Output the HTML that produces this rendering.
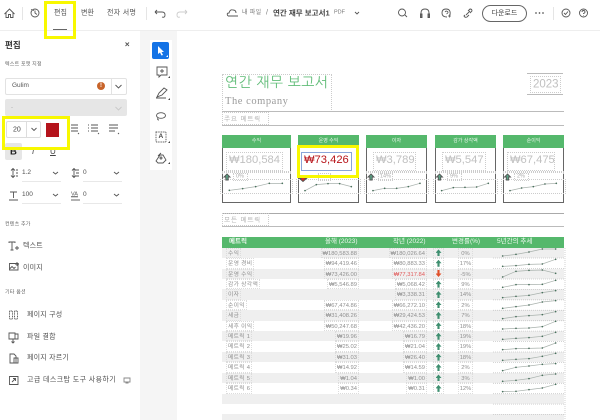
<!DOCTYPE html>
<html lang="ko"><head><meta charset="utf-8"><style>
html,body{margin:0;padding:0;width:600px;height:420px;overflow:hidden;background:#fff}
body{position:relative;font-family:"Liberation Sans","Noto Sans CJK KR",sans-serif;color:#505050;filter:blur(.3px)}
.a{position:absolute;white-space:nowrap}
.t{position:absolute;white-space:nowrap;line-height:1;transform:translateY(-50%)}
svg.i{position:absolute;fill:none;stroke:#555;stroke-width:.9;overflow:visible}
.ln{position:absolute;background:#bbb;height:1px}
.dot{position:absolute;border:1px dotted #ccc;box-sizing:border-box}
.card{position:absolute;top:135px;height:68px;border:1px solid #666;border-top:0;box-sizing:border-box}
.card b{position:absolute;left:-1px;right:-1px;top:0;height:13px;background:#55b86c;color:#e8f5ea;font:400 5px/13px "Liberation Sans","Noto Sans CJK KR",sans-serif;text-align:center}
.val{position:absolute;font-size:11.2px;color:#c0c0c0;line-height:1}
.row{position:relative;height:10.43px;font-size:5.8px;line-height:10.43px;color:#8f8f8f}
.row:nth-child(odd){background:#efefef}
.row span{position:absolute;top:0;height:10.43px;line-height:13.500px;white-space:nowrap;box-sizing:border-box;outline:1px dotted #dcdcdc;outline-offset:-1px;padding:0 2px}
.m{left:4px;letter-spacing:.3px}.c{right:205px}.p{right:137px}.u{left:211px;width:11px;color:#3f8f70}.g{left:236px;width:15px;text-align:center;padding:0!important}
.u::after{content:"";position:absolute;left:2.500px;top:1.700px;width:6px;height:7px;background:currentColor;clip-path:polygon(50% 0,100% 50%,68% 50%,68% 100%,32% 100%,32% 50%,0 50%)}
.u.d{color:#e0502a}.u.d::after{transform:scaleY(-1)}
</style></head><body>

<div class="a" style="left:0;top:30px;width:600px;height:1px;background:#eee"></div>
<div class="a" style="left:140px;top:31px;width:37px;height:389px;background:#f5f5f5"></div>
<div class="a" style="left:150px;top:40px;width:22px;height:130px;background:#fff"></div>
<div class="a" style="left:152px;top:42px;width:17px;height:17px;background:#1473e6;border-radius:2px"></div>

<!-- top bar -->
<svg class="i" style="left:0;top:0" width="200" height="30"><path d="M4.500 14 9.500 9 14.500 14M6 12.500V17.500H8.500V14.500H10.500V17.500H13V12.500"/><circle cx="35" cy="13" r="4"/><path d="M35 10.500 35 13 37 14.500M31 9.500 34 10.500"/><path d="M155 12H162Q165 12 165 15T162 17M155 12 157 10M155 12 157 14"/><path d="M187 12H180Q177 12 177 15T180 17M187 12 185 10M187 12 185 14" stroke="#ccc"/></svg>
<div class="a" style="left:22px;top:7px;width:1px;height:13px;background:#e5e5e5"></div>
<div class="t" style="left:54px;top:13px;font-size:7px">편집</div>
<div class="a" style="left:53px;top:29px;width:14px;height:1px;background:#666"></div>
<div class="t" style="left:81px;top:13px;font-size:7px">변환</div>
<div class="t" style="left:107px;top:13px;font-size:7px;letter-spacing:.3px">전자 서명</div>
<div class="a" style="left:146px;top:7px;width:1px;height:13px;background:#e5e5e5"></div>

<svg class="i" style="left:0;top:0" width="600" height="30"><path d="M228 16H238M228 16Q226 13 229 13Q230 9 233 10Q236 10 236 13"/><path d="M355 12 357 14 359 12"/></svg>
<div class="t" style="left:242px;top:13px;font-size:6px;color:#777;letter-spacing:.3px">내 파일</div>
<div class="t" style="left:266px;top:13px;font-size:7px;color:#777">/</div>
<div class="t" style="left:273px;top:13px;font-size:7.500px;font-weight:700;color:#444">연간 재무 보고서1</div>
<div class="t" style="left:334px;top:13px;font-size:5.500px;color:#777">PDF</div>

<svg class="i" style="left:0;top:0" width="600" height="30"><circle cx="402" cy="12.500" r="3.500"/><path d="M405 15 407 17"/><path d="M421 18V13Q421 9 425 9T429 13V18M420.500 14H422V17.500H420.500ZM428 14H429.500V17.500H428Z"/><path d="M450 15Q451 9 446 9Q442 9 442 13Q442 17 447 17"/><path d="M445 12Q446 10.500 447.500 11.500T446.500 14M448 16H451M449.500 14.500V17.500" stroke-width=".8"/><path d="M465 15 464 16Q465 18 467 17L469 15M468 11 470 9Q472 9 472 11L470 13M466 15 470 11"/><circle cx="566" cy="13" r="4"/><path d="M564 13 565.500 14.500 568 11.500"/><circle cx="583.500" cy="13" r="4"/><path d="M582 12Q582 10.500 583.500 10.500T585 12Q585 13 583.500 13.500V14M583.500 15V15.500"/><circle cx="536" cy="13" r=".4"/><circle cx="539.500" cy="13" r=".4"/><circle cx="543" cy="13" r=".4"/></svg>
<div class="a" style="left:482px;top:5px;width:45px;height:17px;box-sizing:border-box;border:1px solid #666;border-radius:9px;font-size:7px;line-height:15px;text-align:center;color:#444">다운로드</div>
<div class="a" style="left:553px;top:7px;width:1px;height:13px;background:#e5e5e5"></div>

<!-- left panel -->
<div class="t" style="left:5px;top:45px;font-size:8.500px;font-weight:700;color:#333">편집</div>
<svg class="i" style="left:0;top:0" width="140" height="60"><path d="M125.500 42.500 129 46M129 42.500 125.500 46"/></svg>
<div class="t" style="left:5px;top:65px;font-size:5px;color:#666;letter-spacing:.2px">텍스트 포맷 지정</div>
<div class="a" style="left:5px;top:78px;width:122px;height:17px;box-sizing:border-box;border:1px solid #e2e2e2;border-radius:2px"></div>
<div class="a" style="left:111px;top:78px;width:1px;height:17px;background:#e2e2e2"></div>
<div class="t" style="left:12px;top:86px;font-size:6.500px;color:#555">Gulim</div>
<div class="a" style="left:97px;top:82px;width:8px;height:8px;border-radius:50%;background:#c8642a;color:#fff;font-size:6px;line-height:8px;text-align:center;font-weight:700">!</div>
<svg class="i" style="left:0;top:0" width="140" height="120"><path d="M115.500 85 118.500 88 121.500 85"/></svg>
<div class="a" style="left:5px;top:99px;width:122px;height:17px;background:#e6e6e6;border-radius:2px"></div>
<svg class="i" style="left:0;top:0" width="140" height="120"><path d="M115.500 107 118.500 110 121.500 107" stroke="#c8c8c8"/></svg>
<div class="t" style="left:11px;top:108px;font-size:6px;color:#aaa">-</div>

<div class="a" style="left:6px;top:121px;width:35px;height:17px;box-sizing:border-box;border:1px solid #ddd;border-radius:2px"></div>
<div class="a" style="left:26px;top:121px;width:1px;height:17px;background:#ddd"></div>
<div class="t" style="left:13px;top:130px;font-size:7px;color:#444">20</div>
<svg class="i" style="left:0;top:0" width="140" height="170"><path d="M31.500 128 34 130.500 36.500 128"/><path d="M71 125H78M71 128H78M71 131H78M91 125H98M91 128H98M91 131H98M109 125H118M109 128H118M109 131H115"/><path d="M88 125H89M88 128H89M88 131H89"/><path d="M78 134 79 133M98 134 99 133M118 134 119 133"/></svg>
<div class="a" style="left:46px;top:123px;width:13px;height:14px;background:#b5141c"></div>

<div class="a" style="left:5px;top:143px;width:17px;height:17px;background:#e6e6e6;border-radius:2px"></div>
<div class="t" style="left:10px;top:152px;font-size:9.500px;font-weight:700;color:#222">B</div>
<div class="t" style="left:32px;top:152px;font-size:8px;font-style:italic;color:#444">I</div>
<div class="t" style="left:50px;top:152px;font-size:8px;text-decoration:underline;color:#444">U</div>

<svg class="i" style="left:0;top:0" width="140" height="210" stroke-width=".8"><path d="M13 169V177M11 170.500 13 168.500 15 170.500M11 175.500 13 177.500 15 175.500M16 170H18M16 173H18M16 176H18"/><path d="M74 169V177M72 170.500 74 168.500 76 170.500M72 175.500 74 177.500 76 175.500M76 170H79M76 173H79M76 176H79"/><path d="M10 192H17M13.500 192V198M9 200H18"/><path d="M71 200H80"/><path d="M53 172 55.500 174 58 172M114 172 116.500 174 119 172M53 194 55.500 196 58 194M114 194 116.500 196 119 194"/></svg>
<div class="t" style="left:22px;top:173px;font-size:6.500px">1.2</div>
<div class="t" style="left:83px;top:173px;font-size:6.500px">0</div>
<div class="t" style="left:22px;top:195px;font-size:6.500px">100</div>
<div class="t" style="left:71px;top:195px;font-size:5.500px;text-decoration:underline;color:#555">VA</div>
<div class="t" style="left:83px;top:195px;font-size:6.500px">0</div>
<div class="ln" style="left:22px;top:181px;width:39px;background:#e8e8e8"></div>
<div class="ln" style="left:83px;top:181px;width:39px;background:#e8e8e8"></div>
<div class="ln" style="left:22px;top:203px;width:39px;background:#e8e8e8"></div>
<div class="ln" style="left:83px;top:203px;width:39px;background:#e8e8e8"></div>

<div class="t" style="left:5px;top:225px;font-size:5px;color:#666;letter-spacing:.2px">컨텐츠 추가</div>
<svg class="i" style="left:0;top:0" width="140" height="400" stroke-width=".8"><path d="M9 243V242H15V243M12 242V250M10.500 250H13.500M15 248H19M17 246V250"/><path d="M9.500 263.500H18V270H9.500ZM9.500 269 12 266.500 14 268.500 15.500 267M17 262V266M15 264H19"/>
<path d="M9.500 311H12.500V319H9.500ZM14.500 311H17.500V319H14.500Z" stroke-dasharray="1 .6"/>
<path d="M9 333H15V339H9ZM15 334H18V339H15M13 339V343M11.500 341.500 13 343 14.500 341.500"/>
<path d="M10 354H14L16 356V363H10ZM14 358H18V363H14Z"/>
<path d="M9.500 376.500H18V384.500H9.500ZM12 382 15.500 378.500M13 378.500H15.500V381"/>
<path d="M124 378H130V382H124ZM125.500 383H128.500" stroke="#888"/></svg>
<div class="t" style="left:23px;top:246px;font-size:7px;letter-spacing:.2px">텍스트</div>
<div class="t" style="left:23px;top:268px;font-size:7px;letter-spacing:.2px">이미지</div>
<div class="t" style="left:5px;top:293px;font-size:5px;color:#666;letter-spacing:.2px">기타 옵션</div>
<div class="t" style="left:27px;top:315px;font-size:7px;letter-spacing:.2px">페이지 구성</div>
<div class="t" style="left:27px;top:337px;font-size:7px;letter-spacing:.2px">파일 결합</div>
<div class="t" style="left:27px;top:358px;font-size:7px;letter-spacing:.2px">페이지 자르기</div>
<div class="t" style="left:27px;top:380px;font-size:7px;letter-spacing:.4px">고급 데스크탑 도구 사용하기</div>

<!-- tool rail -->
<svg class="i" style="left:0;top:0" width="177" height="175" stroke-width=".9"><path d="M158 46V54L160 52.500 161.500 55.500 163 55 161.500 52H164Z" fill="#fff" stroke="none"/><path d="M166 57 168 57 168 55Z" fill="#fff" stroke="none"/>
<path d="M157 67H167V75H161L159 77V75H157ZM162 69V73M160 71H164"/><path d="M168 78 170 78 170 76Z" fill="#444" stroke="none"/>
<path d="M157 97 159 93 164 88 167 90 162 95ZM156 98H166"/><path d="M168 100 170 100 170 98Z" fill="#444" stroke="none"/>
<ellipse cx="161" cy="115.500" rx="4.500" ry="2.800"/><path d="M158 118Q157 120 159 120"/>
<path d="M156 132H166V142H156Z" stroke-dasharray="1 .7"/><path d="M168 143 170 143 170 141Z" fill="#444" stroke="none"/>
<path d="M156 161 160 155 163 155 166 160 163 163H158ZM158 156 161 153"/><circle cx="161" cy="158" r="1"/><path d="M168 164 170 164 170 162Z" fill="#444" stroke="none"/></svg>
<div class="t" style="left:158.500px;top:137px;font-size:6.500px;font-weight:700;color:#444">A</div>

<!-- document head -->
<div class="dot" style="left:222px;top:74px;width:110px;height:38px"></div>
<div class="t" style="left:225px;top:83px;font:14px/1 NanumGothic,'Noto Sans CJK KR',sans-serif;color:#62bd79;letter-spacing:.37px">연간 재무 보고서</div>
<div class="t" style="left:225px;top:102px;font:10.500px/1 'Liberation Serif',serif;color:#9a9a9a;letter-spacing:.55px">The company</div>
<div class="ln" style="left:527px;top:73px;width:36px"></div>
<div class="ln" style="left:527px;top:94px;width:36px"></div>
<div class="dot" style="left:530px;top:76px;width:31px;height:17px"></div>
<div class="t" style="left:533px;top:85px;font-size:11.500px;color:#c0c0c0">2023</div>
<div class="ln" style="left:222px;top:111px;width:342px"></div>
<div class="ln" style="left:222px;top:125px;width:342px"></div>
<div class="dot" style="left:222px;top:112px;width:47px;height:13px"></div>
<div class="t" style="left:224px;top:118.500px;font:6.500px/1 NanumGothic,'Noto Sans CJK KR',sans-serif;color:#a8a8a8;letter-spacing:.8px">주요 메트릭</div>

<!-- cards -->
<div class="card" style="left:222px;width:69px"><b>수익</b></div>
<div class="card" style="left:298px;width:61px"><b>운영 수익</b></div>
<div class="card" style="left:366px;width:61px"><b>이자</b></div>
<div class="card" style="left:435px;width:61px"><b>감가 상각액</b></div>
<div class="card" style="left:503px;width:61px"><b>순이익</b></div>

<div class="dot" style="left:226px;top:152px;width:57px;height:19px"></div>
<div class="dot" style="left:373px;top:152px;width:43px;height:19px"></div>
<div class="dot" style="left:442px;top:152px;width:44px;height:19px"></div>
<div class="dot" style="left:507px;top:152px;width:48px;height:19px"></div>
<div class="val" style="left:229px;top:155px">₩180,584</div>
<div class="val" style="left:376px;top:155px">₩3,789</div>
<div class="val" style="left:445px;top:155px">₩5,547</div>
<div class="val" style="left:510px;top:155px">₩67,475</div>

<div class="dot" style="left:222px;top:171px;width:69px;height:1px"></div>
<div class="dot" style="left:366px;top:171px;width:61px;height:1px"></div>
<div class="dot" style="left:435px;top:171px;width:61px;height:1px"></div>
<div class="dot" style="left:503px;top:171px;width:61px;height:1px"></div>

<div class="dot" style="left:220px;top:179px;width:73px;height:15px"></div>
<div class="dot" style="left:296px;top:179px;width:65px;height:15px"></div>
<div class="dot" style="left:364px;top:179px;width:65px;height:15px"></div>
<div class="dot" style="left:433px;top:179px;width:65px;height:15px"></div>
<div class="dot" style="left:501px;top:179px;width:65px;height:15px"></div>

<div class="dot" style="left:233px;top:173px;width:15px;height:8px"></div>
<div class="t" style="left:236px;top:177px;font-size:5.500px;color:#aaa">0%</div>
<div class="dot" style="left:318px;top:173px;width:13px;height:8px"></div>
<div class="dot" style="left:378px;top:173px;width:15px;height:8px"></div>
<div class="t" style="left:380px;top:177px;font-size:5.500px;color:#aaa">14%</div>
<div class="dot" style="left:447px;top:173px;width:15px;height:8px"></div>
<div class="t" style="left:450px;top:177px;font-size:5.500px;color:#aaa">9%</div>
<div class="dot" style="left:514px;top:173px;width:15px;height:8px"></div>
<div class="t" style="left:517px;top:177px;font-size:5.500px;color:#aaa">2%</div>

<svg class="i" style="left:0;top:0" width="600" height="240" stroke="none"><defs><marker id="k" markerUnits="userSpaceOnUse" markerWidth="8" markerHeight="8" refX="4" refY="4"><circle cx="4" cy="4" r="2" fill="#2f7d55"/></marker></defs>
<g fill="#5aa385"><path d="M227 174 230 177H228.200V180H225.800V177H224Z"/><path d="M371 174 374 177H372.200V180H369.800V177H368Z"/><path d="M439.500 174 442.500 177H440.700V180H438.300V177H436.500Z"/><path d="M507.500 174 510.500 177H508.700V180H506.300V177H504.500Z"/></g>
<path d="M301 177H305V178.500H306.500L303 181.500 299.500 178.500H301Z" fill="#d0342a"/>
<g transform="translate(210,125) scale(.3333)" fill="none" stroke="#a9b2ad" stroke-width="2.200" marker-start="url(#k)" marker-mid="url(#k)" marker-end="url(#k)"><polyline points="58,196 98,191 137,185 178,175 217,175"/><polyline points="285,197 319,179 354,176 389,176 424,185"/><polyline points="489,197 524,190 560,190 595,185 630,175"/><polyline points="695,197 730,188 765,187 800,186 835,175"/><polyline points="900,197 935,189 970,185 1005,177 1039,175"/></g></svg>

<!-- section 2 -->
<div class="ln" style="left:222px;top:213px;width:342px;background:#aaa"></div>
<div class="ln" style="left:222px;top:226px;width:342px"></div>
<div class="dot" style="left:222px;top:213px;width:47px;height:13px"></div>
<div class="t" style="left:224px;top:219.500px;font:6.500px/1 NanumGothic,'Noto Sans CJK KR',sans-serif;color:#a8a8a8;letter-spacing:.8px">모든 메트릭</div>

<!-- table -->
<div class="a" style="left:222px;top:237px;width:342px;height:10.700px;background:#55b86c;color:#eef8f0;font-size:6.500px;line-height:10.700px">
<div class="a" style="left:7px;font-weight:700">메트릭</div><div class="a" style="left:103px">올해 (2023)</div><div class="a" style="left:171px">작년 (2022)</div><div class="a" style="left:230px">변경률(%)</div><div class="a" style="left:275px">5년간의 추세</div></div>
<div class="a" style="left:222px;top:247.700px;width:342px;white-space:normal">
<div class="row"><span class="m">수익</span><span class="c">₩180,583.88</span><span class="p">₩180,026.64</span><span class="u"></span><span class="g">0%</span></div>
<div class="row"><span class="m">운영 경비</span><span class="c">₩94,419.46</span><span class="p">₩80,883.33</span><span class="u"></span><span class="g">17%</span></div>
<div class="row"><span class="m">운영 수익</span><span class="c">₩73,426.00</span><span class="p" style="color:#e05a5a">₩77,317.84</span><span class="u d"></span><span class="g">-5%</span></div>
<div class="row"><span class="m">감가 상각액</span><span class="c">₩5,546.89</span><span class="p">₩5,068.42</span><span class="u"></span><span class="g">9%</span></div>
<div class="row"><span class="m">이자</span><span class="p">₩3,338.31</span><span class="u"></span><span class="g">14%</span></div>
<div class="row"><span class="m">순이익</span><span class="c">₩67,474.86</span><span class="p">₩66,272.10</span><span class="u"></span><span class="g">2%</span></div>
<div class="row"><span class="m">세금</span><span class="c">₩31,408.26</span><span class="p">₩29,424.53</span><span class="u"></span><span class="g">7%</span></div>
<div class="row"><span class="m">세후 이익</span><span class="c">₩50,247.68</span><span class="p">₩42,436.20</span><span class="u"></span><span class="g">18%</span></div>
<div class="row"><span class="m">메트릭 1</span><span class="c">₩19.96</span><span class="p">₩16.79</span><span class="u"></span><span class="g">19%</span></div>
<div class="row"><span class="m">메트릭 2</span><span class="c">₩25.02</span><span class="p">₩21.04</span><span class="u"></span><span class="g">19%</span></div>
<div class="row"><span class="m">메트릭 3</span><span class="c">₩31.03</span><span class="p">₩26.40</span><span class="u"></span><span class="g">18%</span></div>
<div class="row"><span class="m">메트릭 4</span><span class="c">₩14.92</span><span class="p">₩14.59</span><span class="u"></span><span class="g">2%</span></div>
<div class="row"><span class="m">메트릭 5</span><span class="c">₩1.04</span><span class="p">₩1.00</span><span class="u"></span><span class="g">3%</span></div>
<div class="row"><span class="m">메트릭 6</span><span class="c">₩0.34</span><span class="p">₩0.31</span><span class="u"></span><span class="g">12%</span></div>
<div class="row"></div><div class="row"></div><div class="row"></div>
</div>
<svg class="i" style="left:0;top:0" width="600" height="420" stroke="none"><path fill="none" stroke="#c8c8c8" stroke-width=".8" stroke-dasharray="1 1" d="M493 258H565M493 268.500H565M493 279H565M493 289.400H565M493 299.800H565M493 310.300H565M493 320.700H565M493 331.100H565M493 341.500H565M493 352H565M493 362.400H565M493 372.800H565M493 383.300H565M493 393.700H565M493 404.100H565M493 414.500H565M565 248V420"/>
<g transform="translate(390,230) scale(.3333)" fill="none" stroke="#a9b2ad" stroke-width="2.200" marker-start="url(#k)" marker-mid="url(#k)" marker-end="url(#k)">
<polyline points="338,78 378,73 417,66 457,57 497,57"/><polyline points="338,109 378,107 417,103 457,102 497,88"/><polyline points="338,141 378,124 417,121 457,120 497,130"/><polyline points="338,172 378,164 417,164 457,163 497,151"/><polyline points="338,203 378,199 417,196 457,188 497,182"/><polyline points="338,235 378,230 417,225 457,216 497,212"/><polyline points="338,266 378,260 417,257 457,254 497,245"/><polyline points="338,297 378,295 417,294 457,290 497,274"/><polyline points="338,328 378,325 417,323 457,319 497,307"/><polyline points="338,359 378,356 417,355 457,354 497,339"/><polyline points="338,391 378,388 417,386 457,379 497,370"/><polyline points="338,422 378,412 417,408 457,403 497,401"/><polyline points="338,454 378,451 417,446 457,436 497,432"/><polyline points="338,485 378,484 417,479 457,474 497,463"/></g></svg>

<!-- yellow highlights and selected value -->
<div class="a" style="left:301px;top:152px;width:51px;height:19px;box-sizing:border-box;border:1px solid #8aa5d8"></div>
<div class="val" style="left:304px;top:155px;color:#b8141a">₩73,426</div>
<div class="a" style="left:297px;top:145px;width:62px;height:33px;box-sizing:border-box;border:3px solid #f8f800"></div>
<div class="a" style="left:44px;top:1px;width:32px;height:38px;box-sizing:border-box;border:3px solid #f8f800"></div>
<div class="a" style="left:2px;top:116px;width:68px;height:34px;box-sizing:border-box;border:3px solid #f8f800"></div>
</body></html>
